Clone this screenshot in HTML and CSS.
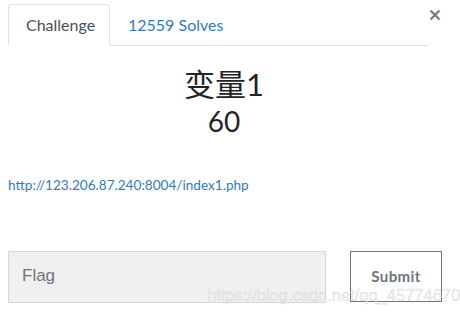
FILE: index.html
```html
<!DOCTYPE html>
<html>
<head>
<meta charset="utf-8">
<link rel="stylesheet" href="styles.css">
</head>
<body>
<div class="modal">
  <div class="header">
    <ul class="tabs">
      <li class="tab active">Challenge</li>
      <li class="tab">12559 Solves</li>
    </ul>
    <svg class="close" width="12" height="12" viewBox="0 0 12 12"><path d="M1.5 1.5L10.5 10.5M10.5 1.5L1.5 10.5" stroke="#7d7d7d" stroke-width="2.4" fill="none"/></svg>
  </div>
  <div class="body">
    <h3 class="name">变量1</h3>
    <div class="value">60</div>
    <a class="link" href="#">http://123.206.87.240:8004/index1.php</a>
    <div class="form">
      <div class="flag">Flag</div>
      <div class="submit">Submit</div>
    </div>
  </div>
  <div class="watermark">https://blog.csdn.net/qq_45774670</div>
</div>
</body>
</html>
```
FILE: styles.css
```css
html, body {
  margin: 0;
  padding: 0;
  background: #fff;
}
.modal {
  position: relative;
  width: 460px;
  height: 320px;
  padding: 4px 8px 0 8px;
  box-sizing: border-box;
  font-family: Lato, "Noto Sans CJK SC", sans-serif;
  color: #212529;
}
.header {
  display: flex;
  align-items: flex-start;
}
.tabs {
  display: flex;
  margin: 0;
  padding: 0;
  list-style: none;
  width: 420px;
  border-bottom: 1px solid #dee2e6;
  height: 41px;
}
.tab {
  box-sizing: border-box;
  height: 41px;
  padding: 10px 16px 0 17px;
  font-size: 16px;
  color: #337ab7;
  border: 1px solid transparent;
  border-radius: 4px 4px 0 0;
}
.tab.active {
  width: 102px;
  color: #495057;
  border-color: #dee2e6 #dee2e6 #fff;
  height: 42px;
  margin-bottom: -1px;
  background: #fff;
}
.close {
  margin-left: 1px;
  margin-top: 5px;
}
.body {
  width: 432px;
}
.name {
  margin: 19px 0 0 0;
  text-align: center;
  font-weight: normal;
  font-size: 31px;
  line-height: 38px;
}
.value {
  text-align: center;
  font-size: 28px;
  line-height: 34px;
  margin-top: 1px;
}
.link {
  display: block;
  margin-top: 38px;
  font-size: 13.6px;
  line-height: 18px;
  color: #337ab7;
  text-decoration: none;
}
.form {
  display: flex;
  margin-top: 57px;
  align-items: flex-start;
}
.flag {
  flex-shrink: 0;
  box-sizing: border-box;
  width: 318px;
  height: 52px;
  background: #f0f0f0;
  border: 1px solid #d3d6da;
  padding: 14px 0 0 13px;
  font-family: "Liberation Sans", Arial, sans-serif;
  font-size: 17px;
  color: #6c757d;
}
.submit {
  flex-shrink: 0;
  box-sizing: border-box;
  margin-left: 24px;
  width: 92px;
  height: 51px;
  border: 1px solid #6c757d;
  text-align: center;
  padding-top: 15px;
  font-size: 15px;
  font-weight: bold;
  color: #6c757d;
  letter-spacing: 0.4px;
}
.watermark {
  position: absolute;
  left: 207px;
  top: 286px;
  font-family: "Liberation Sans", Arial, sans-serif;
  font-size: 16.5px;
  color: rgba(238, 238, 238, 0.8);
  -webkit-text-stroke: 0.5px rgba(170, 170, 170, 0.35);
  white-space: nowrap;
}
```
